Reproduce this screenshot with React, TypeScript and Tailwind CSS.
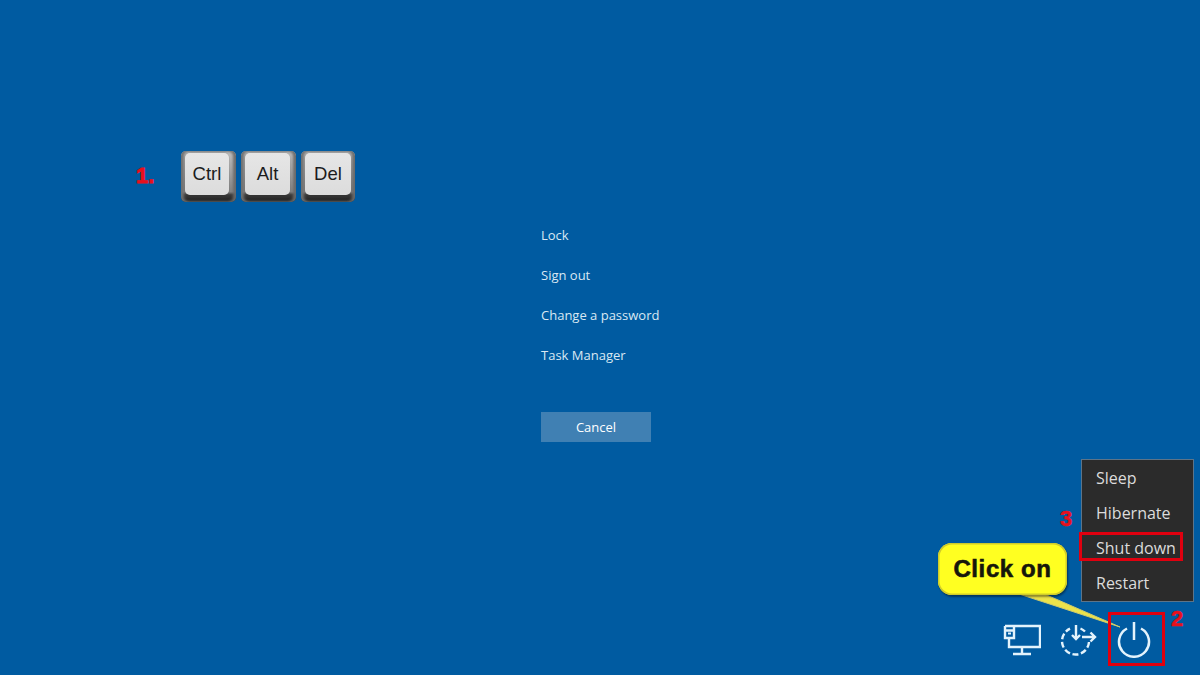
const font = "font-['Open_Sans','Noto_Sans',sans-serif]";

function Key({ label, w, pad }: { label: string; w: string; pad: string }) {
  return (
    <div className={`${w} ${pad} h-[51px] rounded-[5px] bg-[linear-gradient(180deg,#c4c4c4_0%,#a6a6a6_40%,#858585_80%,#3a3a3a_86%,#1c1c1c_100%)] pt-[2px] shadow-[inset_3px_0_3px_#707070,inset_-3px_0_3px_#6a6a6a]`}>
      <div className="h-[42px] rounded-[5px] bg-[linear-gradient(180deg,#e6e6e6,#dcdcdc)] shadow-[0_0_2px_#00000040] flex items-center justify-center font-['Liberation_Sans',sans-serif] text-[18.500px] text-[#1c1c1c]">
        {label}
      </div>
    </div>
  );
}

export default function App() {
  return (
    <div className={`relative w-[1200px] h-[675px] overflow-hidden bg-[#005ba1] ${font}`}>
      {/* Centre menu */}
      <div className="ml-[541px] pt-[225px] w-[110px] flex flex-col items-start text-[13px] leading-[20px] text-[#d9e8f3]">
        <div className="h-[40px] whitespace-nowrap">Lock</div>
        <div className="h-[40px] whitespace-nowrap">Sign out</div>
        <div className="h-[40px] whitespace-nowrap">Change a password</div>
        <div className="h-[40px] whitespace-nowrap">Task Manager</div>
        <div className="mt-[27px] w-[110px] h-[30px] bg-[#4080b3] text-white flex items-center justify-center">Cancel</div>
      </div>

      {/* Step 1: keys */}
      <div className="absolute left-[136px] top-[151px] flex items-start">
        <span className="w-[45px] font-['Liberation_Sans',sans-serif] font-bold text-[22px] leading-[50px] text-[#e8101c] [-webkit-text-stroke:1px_#e8101c]">1.</span>
        <div className="flex gap-[5px]">
          <Key label="Ctrl" w="w-[55px]" pad="pl-[4px] pr-[7px]" />
          <Key label="Alt" w="w-[55px]" pad="pl-[4px] pr-[6px]" />
          <Key label="Del" w="w-[54px]" pad="pl-[4px] pr-[4px]" />
        </div>
      </div>

      {/* Power menu */}
      <div className="absolute left-[1081px] top-[459px] w-[113px] h-[143px] bg-[#2b2b2b] border border-[#5d7488] text-[#dcdcdc] text-[16px]">
        {["Sleep", "Hibernate", "Shut down", "Restart"].map((t) => (
          <div key={t} className="h-[35px] pl-[14px] flex items-center whitespace-nowrap">{t}</div>
        ))}
      </div>
      <div className="absolute left-[1079px] top-[532px] w-[104px] h-[29px] border-[3px] border-[#e0000f]" />
      <span className="absolute left-[1060px] top-[505px] font-['Liberation_Sans',sans-serif] font-bold text-[22px] leading-[28px] text-[#e8101c] [-webkit-text-stroke:0.5px_#e8101c]">3</span>

      {/* Callout */}
      <svg className="absolute left-[1010px] top-[590px]" width="120" height="45" viewBox="0 0 120 45" fill="none">
        <path d="M6 3 L110 37 L32 3 Z" fill="#ece34a" stroke="#cfcb6a" strokeWidth="1" />
      </svg>
      <div className="absolute left-[938px] top-[543px] w-[129px] h-[52px] rounded-[14px] bg-[#ffff21] shadow-[inset_0_0_0_1.500px_#cfcb2b,1px_2px_2px_#00000066] flex items-center justify-center font-['Liberation_Sans',sans-serif] font-bold text-[24px] tracking-[0.6px] text-[#16160a] [-webkit-text-stroke:0.6px_#16160a]">
        Click on
      </div>

      {/* Bottom icons */}
      <svg className="absolute left-[1003px] top-[624px]" width="38" height="32" viewBox="0 0 38 32" fill="none" stroke="#e3f3fc" strokeWidth="2.400">
        <path d="M2 2H37V23H6V14M2 2V14H11V2M2 6.500H11M19 23V30M10 30H28" />
        <path d="M5 9.500H8" strokeWidth="2" />
      </svg>
      <svg className="absolute left-[1059px] top-[622px]" width="38" height="34" viewBox="0 0 38 34" fill="none" stroke="#e3f3fc" strokeWidth="2.400">
        <path d="M30 20A13.500 13.500 0 1 1 11 6.700" strokeDasharray="6 2.600" />
        <path d="M21.500 6.500A13.500 13.500 0 0 1 26 9.500" />
        <path d="M17 3V17M13 13L17 17L21 13M23 15H36M31.500 10.500L36 15L31.500 19.500" />
      </svg>
      <svg className="absolute left-[1117px] top-[620px]" width="34" height="38" viewBox="0 0 34 38" fill="none" stroke="#e3f3fc" strokeWidth="2.500">
        <path d="M17 2V20M10 8.500A15 15 0 1 0 24 8.500" />
      </svg>
      <div className="absolute left-[1108px] top-[612px] w-[57px] h-[54px] border-[3px] border-[#e0000f]" />
      <span className="absolute left-[1171px] top-[605px] font-['Liberation_Sans',sans-serif] font-bold text-[22px] leading-[28px] text-[#e8101c] [-webkit-text-stroke:0.5px_#e8101c]">2</span>
    </div>
  );
}
